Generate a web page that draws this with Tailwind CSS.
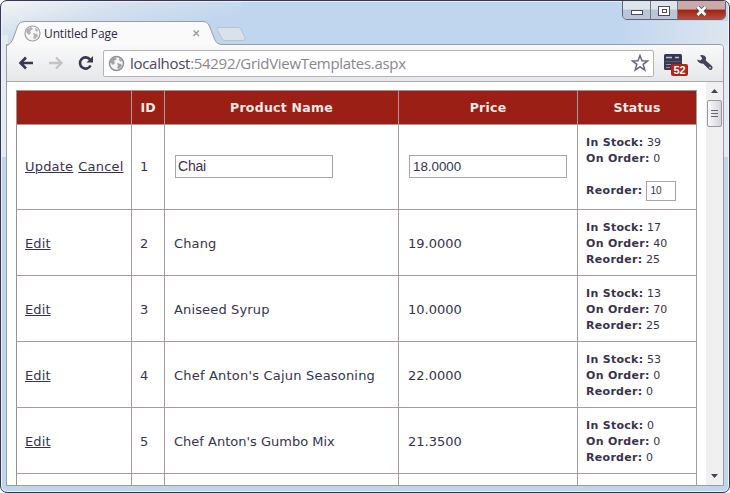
<!DOCTYPE html>
<html lang="en">
<head>
<meta charset="utf-8">
<title>Untitled Page</title>
<script src="https://cdn.jsdelivr.net/npm/@tailwindcss/browser@4"></script>
</head>
<body class="w-[730px] h-[493px] overflow-hidden bg-white">
<div class="relative w-[730px] h-[493px] rounded-[7px] border border-[#3a3552] bg-[#c0d6ee] overflow-hidden flex flex-col shadow-[inset_0_0_0_1px_#eaf3fb]">
  <!-- glass highlights -->
  <div class="absolute left-px top-px w-[240px] h-[60px] bg-linear-to-br from-[#f4f4f4] via-[#dfe7ee]/60 via-30% to-[#c0d6ee]/0 to-60%"></div>
  <div class="absolute right-px top-[20px] w-[110px] h-[24px] bg-linear-to-r from-[#dde6ef]/0 to-[#dde6ef]"></div>
  <div class="absolute right-px top-[44px] w-[7px] h-[112px] bg-[#e4ebf2]"></div>
  <div class="absolute left-px top-[34px] w-[6px] h-[122px] bg-[#e4ebf2]"></div>

  <!-- tab strip -->
  <div class="relative z-10 h-[43px] shrink-0">
    <svg class="absolute left-[5px] top-[19px]" width="245" height="26" viewBox="0 0 245 26">
      <path d="M212 7.500h20q2 0 3 2l4 8q1 3-2 3h-18q-2 0-3-2l-5-9q0-2 1-2z" fill="#d9e1e9" stroke="#b9c1cc"/>
      <path d="M1 26V25Q5 24 7 19L12 5Q14 1.500 18 1.500H198Q201 1.500 203 5L209 20Q211 24.500 216 24.500V26z" fill="#fafafa"/>
      <path d="M.5 26Q5 24 7 19L12 5Q14 1.500 18 1.500H198Q201 1.500 203 5L209 20Q211 24.500 216 24.500H245" fill="none" stroke="#9b9ba6"/>
    </svg>
    <div class="relative flex items-center pt-[24px] pl-[23px]">
      <svg width="17" height="17" viewBox="0 0 17 17"><circle cx="8.500" cy="8.500" r="7.500" fill="#f5f5f5" stroke="#a09ea2" stroke-width="1.200"/><path d="M3 4l4-2 2 2-3 2 1 2-2 2-3-3zM9 8l4 1 1 2-3 3-2-1 1-2zM11 3l3 2-1 2-2-2z" fill="#b3b1b5"/></svg>
      <span class="ml-[3px] h-[17px] leading-[17px] text-[12px] tracking-[-0.12px] text-[#2e2947] font-['Open_Sans',sans-serif]">Untitled Page</span>
    </div>
    <svg class="absolute left-[191px] top-[28px]" width="9" height="9"><path d="M1.500 1.500l5.500 5.500M7 1.500L1.500 7" stroke="#9c9a9e" stroke-width="1.400"/></svg>
    <div class="absolute left-[621px] top-[-1px] w-[104px] h-[20px] flex rounded-b-[5px] border border-[#65617a] overflow-hidden">
      <div class="w-[28px] border-r border-[#77758a] bg-linear-to-b from-[#dce5ec] from-45% to-[#b8c6d5] to-50% flex justify-center pt-[9px]"><div class="w-[12px] h-[5px] border border-[#4d4962] bg-white"></div></div>
      <div class="w-[27px] border-r border-[#77758a] bg-linear-to-b from-[#dce5ec] from-45% to-[#b8c6d5] to-50% flex justify-center pt-[5px]"><div class="w-[12px] h-[10px] border border-[#4d4962] bg-white flex items-center justify-center"><div class="w-[5px] h-[4px] border border-[#4d4962]"></div></div></div>
      <div class="flex-1 bg-linear-to-b from-[#c9aaa8] from-45% via-[#9f2012] via-50% to-[#bd4a35] flex justify-center pt-[5px]"><svg width="13" height="10" viewBox="0 0 13 10"><path d="M2.500 1l8 8M10.500 1l-8 8" stroke="#574c60" stroke-width="4.200"/><path d="M2.500 1l8 8M10.500 1l-8 8" stroke="#fff" stroke-width="2.600"/></svg></div>
    </div>
  </div>

  <!-- browser body -->
  <div class="relative mx-[5px] mb-[6px] h-[442px] flex flex-col border border-[#9b9ba6] rounded-tr-[4px] bg-white overflow-hidden">
    <div class="h-[37px] shrink-0 border-b border-[#aaa9ae] bg-linear-to-b from-[#f9f9f9] to-[#e6e7ea] flex items-center">
      <svg class="ml-[11px]" width="16" height="14" viewBox="0 0 16 14"><path d="M15 7H3M8 1.500L2.500 7 8 12.500" fill="none" stroke="#3a3551" stroke-width="2.600"/></svg>
      <svg class="ml-[14px]" width="16" height="14" viewBox="0 0 16 14"><path d="M1 7h12M8 1.500L13.500 7 8 12.500" fill="none" stroke="#c3c2c5" stroke-width="2.300"/></svg>
      <svg class="ml-[13px]" width="17" height="16" viewBox="0 0 17 16"><path d="M13 4.500A5.600 5.600 0 1 0 13.600 10.500" fill="none" stroke="#3a3551" stroke-width="2.600"/><path d="M16 1v6.500H9.500z" fill="#3a3551"/></svg>
      <div class="ml-[9px] w-[551px] h-[27px] rounded-[2px] border border-[#b4b3b9] bg-white flex items-center">
        <svg class="ml-[4px]" width="17" height="17" viewBox="0 0 17 17"><circle cx="8.500" cy="8.500" r="7" fill="#f5f5f5" stroke="#929095" stroke-width="1.500"/><path d="M3 4l4-2 2 2-3 2 1 2-2 2-3-3zM9 8l4 1 1 2-3 3-2-1 1-2zM11 3l3 2-1 2-2-2z" fill="#a3a1a6"/></svg>
        <span class="ml-[5px] text-[15px] tracking-[-0.3px] leading-[24px] whitespace-nowrap text-[#8a878c] font-['Open_Sans',sans-serif]"><span class="text-[#49455c]">localhost</span>:54292/GridViewTemplates.aspx</span>
        <svg class="ml-auto mr-[4px]" width="18" height="18" viewBox="0 0 18 18"><path d="M9 1.500l2 5.200 5.600.2-4.400 3.500 1.600 5.600L9 12.900 4.200 16l1.600-5.600L1.400 6.900 7 6.700z" fill="#fff" stroke="#68657a" stroke-width="1.500"/></svg>
      </div>
      <div class="relative ml-[10px] mt-[4px] w-[24px] h-[22px]">
        <svg width="18" height="16" viewBox="0 0 18 16"><rect width="18" height="16" rx="1.500" fill="#393650"/><path d="M2 3.500h6M11 3.500h4" stroke="#b4c8dc" stroke-width="1.300"/><path d="M1 7.500h16" stroke="#565a72"/><path d="M2 10.500h5M2 13.500h4" stroke="#a98c98"/></svg>
        <div class="absolute left-[7px] top-[10px] w-[17px] h-[12px] rounded-[2px] bg-[#b32417] text-white text-center font-bold text-[11px] leading-[12px] font-['Liberation_Sans',sans-serif]">52</div>
      </div>
      <svg class="ml-[8px]" width="18" height="18" viewBox="0 0 18 18"><path d="M4 1.300Q8.500 0 10 3.500L9.800 6.500 16 12Q17.500 14 15.800 15.400 14.200 16.600 12.600 15L7 9.600Q2.500 10 1 5.500L4.300 6.500 6.300 4.500z" fill="#454158"/><circle cx="14" cy="13.600" r=".9" fill="#ddd"/></svg>
    </div>

    <div class="flex flex-1 min-h-0">
      <div class="flex-1 min-w-0 overflow-hidden pl-[9px] pt-[8px] font-['DejaVu_Sans',Verdana,sans-serif] text-[13px] text-[#38334e]">
        <div class="w-[681px] border-l border-t border-[#9c9294] grid grid-cols-[115px_33px_234px_179px_119px] grid-rows-[34px_85px_66px_66px_66px_66px_66px] [&>div]:border-r [&>div]:border-b [&>div]:border-[#a69c9e] [&>div]:flex [&>div]:items-center [&>div]:whitespace-nowrap">
          <div class="bg-[#9b1f14]"></div>
          <div class="bg-[#9b1f14] justify-center pt-px font-bold text-[#f3e9e8] text-[12.500px]">ID</div>
          <div class="bg-[#9b1f14] justify-center pt-px font-bold text-[#f3e9e8] text-[12.500px] tracking-[0.25px]">Product Name</div>
          <div class="bg-[#9b1f14] justify-center pt-px font-bold text-[#f3e9e8] text-[12.500px] tracking-[0.25px]">Price</div>
          <div class="bg-[#9b1f14] justify-center pt-px font-bold text-[#f3e9e8] text-[12.500px] tracking-[0.25px]">Status</div>

          <div class="pl-[8px] gap-[5px] tracking-[0.2px]"><span class="underline">Update</span><span class="underline">Cancel</span></div>
          <div class="pl-[8px]">1</div>
          <div class="pl-[10px] pb-[2px]"><div class="w-[158px] h-[23px] border border-[#a8a5ae] bg-white pl-[2px] leading-[21px] text-[14px] tracking-[-0.2px] font-['Liberation_Sans',Arial,sans-serif]">Chai</div></div>
          <div class="pl-[10px] pb-[2px]"><div class="w-[158px] h-[23px] border border-[#a8a5ae] bg-white pl-[3px] leading-[21px] text-[13.330px] font-['Liberation_Sans',Arial,sans-serif]">18.0000</div></div>
          <div class="pl-[8px] pt-[2px] text-[11px] leading-[16px] [&_b]:tracking-[0.3px]"><div><p><b>In Stock:</b> 39</p><p><b>On Order:</b> 0</p><div class="flex items-center mt-[14px] h-[20px]"><b>Reorder:</b><div class="ml-[4px] w-[30px] h-[20px] border border-[#a8a5ae] bg-white pl-[3px] text-[10px] leading-[18px] font-['Liberation_Sans',Arial,sans-serif]">10</div></div></div></div>

          <div class="pl-[8px] pt-[2px] tracking-[0.1px]"><span class="underline">Edit</span></div><div class="pl-[8px] pt-[2px]">2</div><div class="pl-[9px] pt-[2px] tracking-[0.15px]">Chang</div><div class="pl-[9px] pt-[2px]">19.0000</div>
          <div class="pl-[8px] pt-[2px] text-[11px] leading-[16px] [&_b]:tracking-[0.3px]"><div><p><b>In Stock:</b> 17</p><p><b>On Order:</b> 40</p><p><b>Reorder:</b> 25</p></div></div>

          <div class="pl-[8px] pt-[2px] tracking-[0.1px]"><span class="underline">Edit</span></div><div class="pl-[8px] pt-[2px]">3</div><div class="pl-[9px] pt-[2px] tracking-[0.15px]">Aniseed Syrup</div><div class="pl-[9px] pt-[2px]">10.0000</div>
          <div class="pl-[8px] pt-[2px] text-[11px] leading-[16px] [&_b]:tracking-[0.3px]"><div><p><b>In Stock:</b> 13</p><p><b>On Order:</b> 70</p><p><b>Reorder:</b> 25</p></div></div>

          <div class="pl-[8px] pt-[2px] tracking-[0.1px]"><span class="underline">Edit</span></div><div class="pl-[8px] pt-[2px]">4</div><div class="pl-[9px] pt-[2px] tracking-[0.2px]">Chef Anton's Cajun Seasoning</div><div class="pl-[9px] pt-[2px]">22.0000</div>
          <div class="pl-[8px] pt-[2px] text-[11px] leading-[16px] [&_b]:tracking-[0.3px]"><div><p><b>In Stock:</b> 53</p><p><b>On Order:</b> 0</p><p><b>Reorder:</b> 0</p></div></div>

          <div class="pl-[8px] pt-[2px] tracking-[0.1px]"><span class="underline">Edit</span></div><div class="pl-[8px] pt-[2px]">5</div><div class="pl-[9px] pt-[2px]">Chef Anton's Gumbo Mix</div><div class="pl-[9px] pt-[2px]">21.3500</div>
          <div class="pl-[8px] pt-[2px] text-[11px] leading-[16px] [&_b]:tracking-[0.3px]"><div><p><b>In Stock:</b> 0</p><p><b>On Order:</b> 0</p><p><b>Reorder:</b> 0</p></div></div>

          <div></div><div></div><div></div><div></div><div></div>
        </div>
      </div>
      <div class="w-[17px] bg-[#f0f0f1] flex flex-col items-center">
        <svg class="mt-[7px] shrink-0" width="7" height="4"><path d="M3.500 0L7 4H0z" fill="#454158"/></svg>
        <div class="mt-[7px] w-[15px] h-[27px] shrink-0 rounded-[2px] border border-[#98979f] bg-linear-to-r from-[#fafafa] to-[#d4d5da] flex flex-col gap-[2px] items-center justify-center"><i class="w-[7px] h-px bg-[#666377]"></i><i class="w-[7px] h-px bg-[#666377]"></i><i class="w-[7px] h-px bg-[#666377]"></i></div>
        <svg class="mt-auto mb-[7px] shrink-0" width="7" height="4"><path d="M0 0h7L3.500 4z" fill="#454158"/></svg>
      </div>
    </div>
  </div>
</div>
</body>
</html>
